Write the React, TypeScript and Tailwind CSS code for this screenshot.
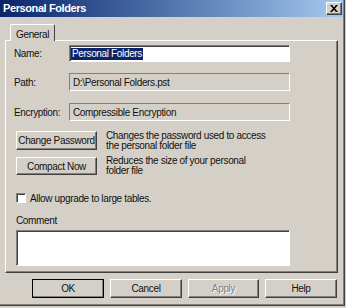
const raised =
  "border border-t-white border-l-white border-r-[#404040] border-b-[#404040] shadow-[inset_-1px_-1px_0_#808080]";
const sunken =
  "border border-t-[#808080] border-l-[#808080] border-r-white border-b-white shadow-[inset_1px_1px_0_#404040]";

const Field = ({ label, value }: { label: string; value: string }) => (
  <div className="flex items-center h-[18px]">
    <span className="w-[63px] pl-[8px]">{label}</span>
    <div className="w-[221px] h-full flex items-center pl-[3px] bg-[#d4d0c8] border border-t-[#808080] border-l-[#808080] border-r-white border-b-white">
      {value}
    </div>
  </div>
);

const Btn = ({ children, className = "", disabled = false }: { children: React.ReactNode; className?: string; disabled?: boolean }) => (
  <button
    className={`${raised} flex items-center justify-center whitespace-nowrap bg-[#d4d0c8] ${
      disabled ? "text-[#808080] [text-shadow:1px_1px_0_#fff]" : "text-[#111]"
    } ${className}`}
  >
    {children}
  </button>
);

export default function App() {
  return (
    <div className="w-[346px] h-[308px] bg-[#d4d0c8] text-[#111] text-[10px] tracking-[-0.35px] font-['Liberation_Sans',Arial,sans-serif]">
      <div className="w-[345px] h-[306px] border-r border-b border-r-[#404040] border-b-[#404040] shadow-[inset_-1px_-1px_0_#808080] flex flex-col">
        {/* title bar */}
        <div className="h-[17px] w-[343px] flex items-center justify-between pl-[3px] pr-[1px] bg-gradient-to-r from-[#0a246a] to-[#a6caf0]">
          <span className="text-white font-bold text-[11px] tracking-[-0.4px]">Personal Folders</span>
          <div className={`${raised} w-[16px] h-[13px] bg-[#d4d0c8] flex items-center justify-center`}>
            <svg width="8" height="7" viewBox="0 0 8 7">
              <path d="M0 0h2l2 2.2L6 0h2L5 3.5 8 7H6L4 4.8 2 7H0l3-3.5z" fill="#000" />
            </svg>
          </div>
        </div>

        {/* tab */}
        <div className="mt-[7px] pl-[10px] flex">
          <div className="relative z-10 -mb-px h-[17px] px-[5px] pt-[2px] bg-[#d4d0c8] border-t border-l border-r border-t-white border-l-white border-r-[#404040] rounded-t-[2px]">
            General
          </div>
        </div>

        {/* tab panel */}
        <div className={`${raised} ml-[5px] w-[333px] h-[233px] flex flex-col`}>
          <div className="mt-[4px] flex items-center h-[17px]">
            <span className="w-[63px] pl-[8px]">Name:</span>
            <div className={`${sunken} w-[221px] h-full bg-white flex items-center pl-[1px]`}>
              <span className="bg-[#0a246a] text-white px-[1px] leading-[12px]">Personal Folders</span>
            </div>
          </div>
          <div className="mt-[11px]">
            <Field label="Path:" value="D:\Personal Folders.pst" />
          </div>
          <div className="mt-[12px]">
            <Field label="Encryption:" value="Compressible Encryption" />
          </div>

          <div className="mt-[10px] flex items-center h-[19px]">
            <Btn className="ml-[10px] w-[81px] h-full">Change Password</Btn>
            <div className="ml-[9px] leading-[10px]">
              Changes the password used to access
              <br />
              the personal folder file
            </div>
          </div>
          <div className="mt-[7px] flex items-center h-[18px]">
            <Btn className="ml-[10px] w-[81px] h-full">Compact Now</Btn>
            <div className="ml-[9px] leading-[10px]">
              Reduces the size of your personal
              <br />
              folder file
            </div>
          </div>

          <div className="mt-[18px] flex items-center h-[10px]">
            <div className={`${sunken} ml-[10px] w-[10px] h-[10px] bg-white`} />
            <span className="ml-[4px]">Allow upgrade to large tables.</span>
          </div>

          <div className="mt-[12px] h-[12px] pl-[10px] leading-[12px]">Comment</div>
          <div className={`${sunken} mt-[3px] ml-[10px] w-[274px] h-[36px] bg-white`} />
        </div>

        {/* buttons */}
        <div className="mt-[6px] pl-[32px] flex gap-[6px] h-[19px]">
          <Btn className="w-[72px] h-full outline outline-1 outline-black -outline-offset-1">OK</Btn>
          <Btn className="w-[72px] h-full">Cancel</Btn>
          <Btn className="w-[71px] h-full" disabled>Apply</Btn>
          <Btn className="w-[72px] h-full">Help</Btn>
        </div>
      </div>
    </div>
  );
}
